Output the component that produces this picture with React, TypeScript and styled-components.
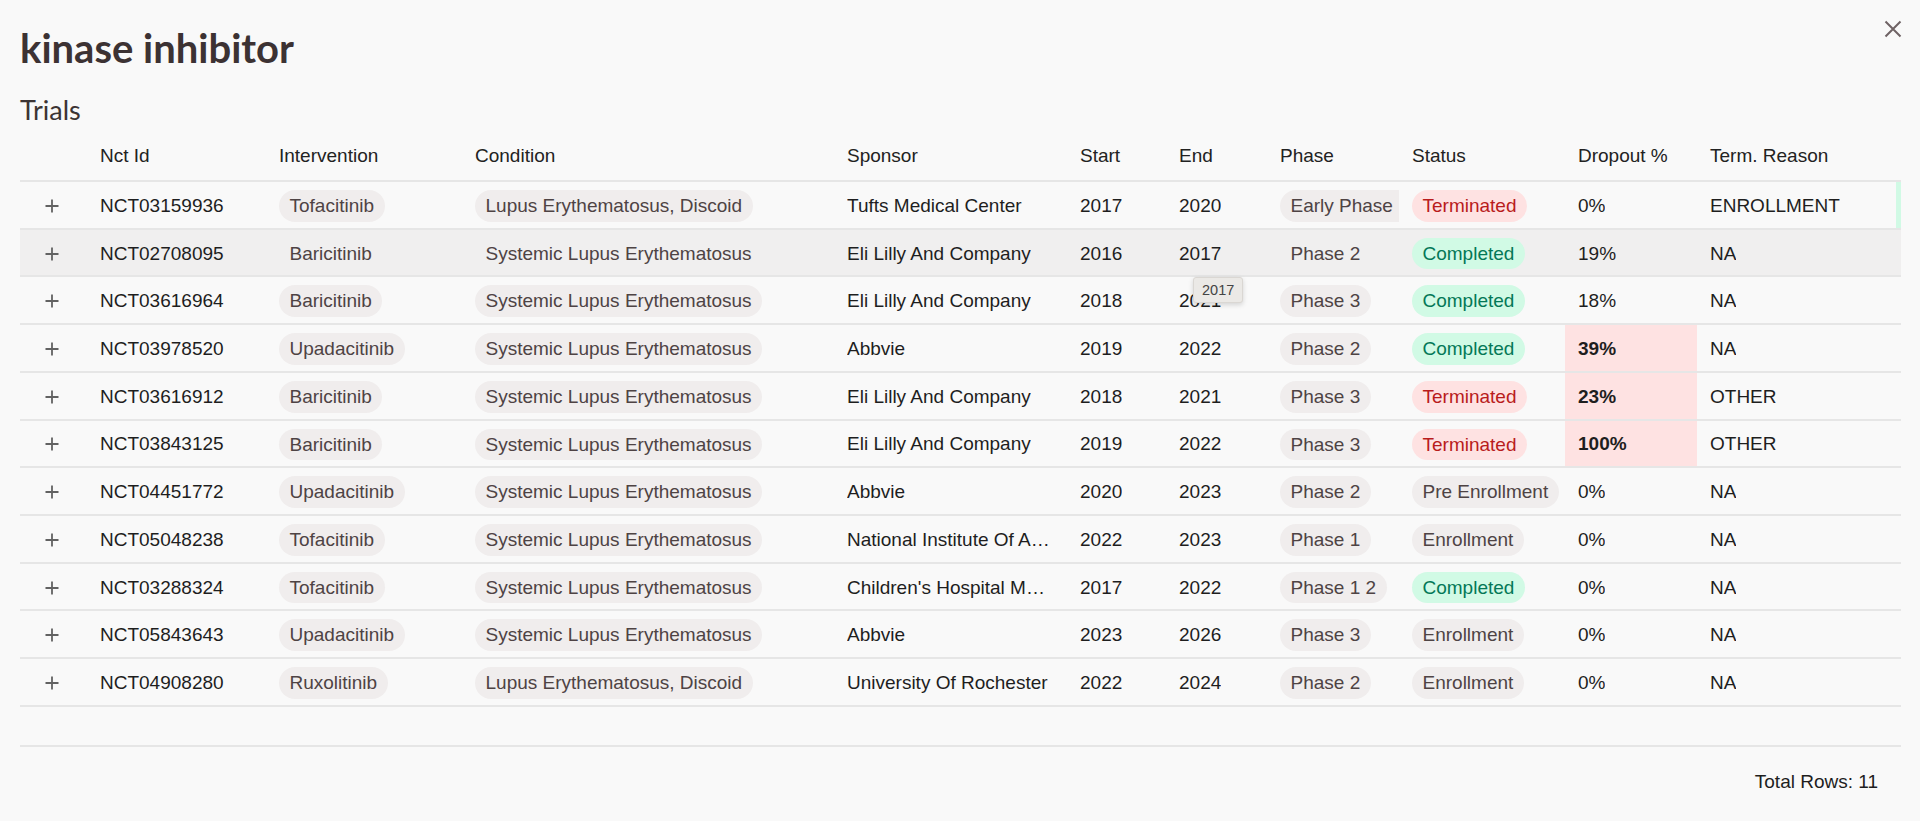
import React, { FC } from "react";
import styled, { createGlobalStyle } from "styled-components";

type Tone = "neutral" | "red" | "green";

interface ITrial {
  nctId: string;
  intervention: string;
  condition: string;
  sponsor: string;
  start: number;
  end: number;
  phase: string;
  status: string;
  dropout: number;
  reason: string;
}

const trials: ITrial[] = [
  { nctId: "NCT03159936", intervention: "Tofacitinib", condition: "Lupus Erythematosus, Discoid", sponsor: "Tufts Medical Center", start: 2017, end: 2020, phase: "Early Phase 1", status: "Terminated", dropout: 0, reason: "ENROLLMENT" },
  { nctId: "NCT02708095", intervention: "Baricitinib", condition: "Systemic Lupus Erythematosus", sponsor: "Eli Lilly And Company", start: 2016, end: 2017, phase: "Phase 2", status: "Completed", dropout: 19, reason: "NA" },
  { nctId: "NCT03616964", intervention: "Baricitinib", condition: "Systemic Lupus Erythematosus", sponsor: "Eli Lilly And Company", start: 2018, end: 2021, phase: "Phase 3", status: "Completed", dropout: 18, reason: "NA" },
  { nctId: "NCT03978520", intervention: "Upadacitinib", condition: "Systemic Lupus Erythematosus", sponsor: "Abbvie", start: 2019, end: 2022, phase: "Phase 2", status: "Completed", dropout: 39, reason: "NA" },
  { nctId: "NCT03616912", intervention: "Baricitinib", condition: "Systemic Lupus Erythematosus", sponsor: "Eli Lilly And Company", start: 2018, end: 2021, phase: "Phase 3", status: "Terminated", dropout: 23, reason: "OTHER" },
  { nctId: "NCT03843125", intervention: "Baricitinib", condition: "Systemic Lupus Erythematosus", sponsor: "Eli Lilly And Company", start: 2019, end: 2022, phase: "Phase 3", status: "Terminated", dropout: 100, reason: "OTHER" },
  { nctId: "NCT04451772", intervention: "Upadacitinib", condition: "Systemic Lupus Erythematosus", sponsor: "Abbvie", start: 2020, end: 2023, phase: "Phase 2", status: "Pre Enrollment", dropout: 0, reason: "NA" },
  { nctId: "NCT05048238", intervention: "Tofacitinib", condition: "Systemic Lupus Erythematosus", sponsor: "National Institute Of Allergy And Infectious Diseases (NIAID)", start: 2022, end: 2023, phase: "Phase 1", status: "Enrollment", dropout: 0, reason: "NA" },
  { nctId: "NCT03288324", intervention: "Tofacitinib", condition: "Systemic Lupus Erythematosus", sponsor: "Children's Hospital Medical Center, Cincinnati", start: 2017, end: 2022, phase: "Phase 1 2", status: "Completed", dropout: 0, reason: "NA" },
  { nctId: "NCT05843643", intervention: "Upadacitinib", condition: "Systemic Lupus Erythematosus", sponsor: "Abbvie", start: 2023, end: 2026, phase: "Phase 3", status: "Enrollment", dropout: 0, reason: "NA" },
  { nctId: "NCT04908280", intervention: "Ruxolitinib", condition: "Lupus Erythematosus, Discoid", sponsor: "University Of Rochester", start: 2022, end: 2024, phase: "Phase 2", status: "Enrollment", dropout: 0, reason: "NA" },
];

const headers = ["", "Nct Id", "Intervention", "Condition", "Sponsor", "Start", "End", "Phase", "Status", "Dropout %", "Term. Reason"];

const statusTone = (status: string): Tone => {
  if (status === "Terminated") return "red";
  if (status === "Completed") return "green";
  return "neutral";
};

const PlusIcon: FC = () => (
  <svg width="14" height="14" viewBox="0 0 14 14">
    <path d="M7 0.5v13M0.5 7h13" stroke="#626262" strokeWidth="1.8" />
  </svg>
);

const CloseIcon: FC = () => (
  <svg width="18" height="18" viewBox="0 0 18 18">
    <path d="M1.5 1.5l15 15M16.5 1.5l-15 15" stroke="#6f6365" strokeWidth="2" />
  </svg>
);

const App: FC = () => {
  return (
    <Page>
      <GlobalStyle />
      <TopBar>
        <Title>kinase inhibitor</Title>
        <CloseButton aria-label="close">
          <CloseIcon />
        </CloseButton>
      </TopBar>

      <SectionTitle>Trials</SectionTitle>

      <Table>
        <HeaderRow>
          {headers.map((h, i) => (
            <HeaderCell key={i}>{h}</HeaderCell>
          ))}
        </HeaderRow>

        {trials.map((t, i) => {
          const hovered = i === 1;
          const high = t.dropout > 20;
          return (
            <Row key={t.nctId} $hovered={hovered}>
              <ExpandCell>
                <PlusIcon />
              </ExpandCell>
              <Cell>
                <Text>{t.nctId}</Text>
              </Cell>
              <Cell>
                <Chip $tone="neutral" $flat={hovered}>{t.intervention}</Chip>
              </Cell>
              <Cell>
                <Chip $tone="neutral" $flat={hovered}>{t.condition}</Chip>
              </Cell>
              <Cell $padRight={15}>
                <Text>{t.sponsor}</Text>
              </Cell>
              <Cell>
                <Text>{t.start}</Text>
              </Cell>
              <Cell>
                <Text>{t.end}</Text>
              </Cell>
              <Cell $padRight={0}>
                <Chip $tone="neutral" $flat={hovered}>{t.phase}</Chip>
              </Cell>
              <Cell>
                <Chip $tone={statusTone(t.status)}>{t.status}</Chip>
              </Cell>
              <Cell $alert={high}>
                <Text>{t.dropout}%</Text>
              </Cell>
              <Cell $marked={i === 0}>
                <Text>{t.reason}</Text>
              </Cell>
              {hovered && <Tooltip>{t.end}</Tooltip>}
            </Row>
          );
        })}

        <Spacer />
      </Table>

      <Footer>Total Rows: {trials.length}</Footer>
    </Page>
  );
};

const GlobalStyle = createGlobalStyle`
  html, body {
    margin: 0;
    background: #f9f9f9;
  }
  body {
    font-family: "Liberation Sans", Arial, sans-serif;
    color: #1e1e1e;
  }
`;

const COLUMNS = "67px 179px 196px 372px 233px 99px 101px 132px 166px 132px 204px";

const Page = styled.div`
  min-height: 100vh;
  box-sizing: border-box;
  padding: 24px 19px 0 20px;
  background: #f9f9f9;
`;

const TopBar = styled.div`
  display: flex;
  justify-content: space-between;
  align-items: flex-start;
`;

const Title = styled.h1`
  margin: 0;
  font-family: Lato, "Noto Sans", sans-serif;
  font-size: 40px;
  line-height: 48px;
  font-weight: 700;
  color: #3c3233;
`;

const CloseButton = styled.button`
  margin: -4px -1px 0 0;
  padding: 0;
  border: 0;
  background: none;
  width: 18px;
  height: 18px;
  cursor: pointer;
  display: flex;
`;

const SectionTitle = styled.h2`
  margin: 22px 0 0;
  font-family: Lato, "Noto Sans", sans-serif;
  font-size: 27px;
  line-height: 32px;
  font-weight: 400;
  color: #3c3434;
`;

const Table = styled.div`
  margin-top: 8px;
  width: 1881px;
  font-size: 19px;
`;

const HeaderRow = styled.div`
  display: grid;
  grid-template-columns: ${COLUMNS};
  height: 48px;
  box-sizing: border-box;
  border-bottom: 2px solid #e6e6e6;
`;

const HeaderCell = styled.div`
  display: flex;
  align-items: center;
  padding: 0 13px 3px;
  white-space: nowrap;
  color: #222;
`;

const Row = styled.div<{ $hovered?: boolean }>`
  position: relative;
  display: grid;
  grid-template-columns: ${COLUMNS};
  height: 47.73px;
  box-sizing: border-box;
  padding-top: 2px;
  border-bottom: 2px solid #e6e6e6;
  background: ${({ $hovered }) => ($hovered ? "#f0efef" : "transparent")};
`;

const Cell = styled.div<{ $padRight?: number; $alert?: boolean; $marked?: boolean }>`
  display: flex;
  align-items: center;
  min-width: 0;
  overflow: hidden;
  margin-top: -2px;
  padding: 2px ${({ $padRight }) => ($padRight ?? 13)}px 0 13px;
  background: ${({ $alert }) => ($alert ? "#fee2e2" : "transparent")};
  font-weight: ${({ $alert }) => ($alert ? 700 : 400)};
  box-shadow: ${({ $marked }) => ($marked ? "inset -5px 0 0 #d1fae5" : "none")};
`;

const ExpandCell = styled.div`
  display: flex;
  align-items: center;
  padding-left: 25px;
`;

const Text = styled.span`
  min-width: 0;
  overflow: hidden;
  text-overflow: ellipsis;
  white-space: nowrap;
`;

const toneColors: Record<Tone, { bg: string; fg: string }> = {
  neutral: { bg: "#f0eded", fg: "#4e4344" },
  red: { bg: "#fee2e2", fg: "#b91c1c" },
  green: { bg: "#d1fae5", fg: "#047857" },
};

const Chip = styled.span<{ $tone: Tone; $flat?: boolean }>`
  flex-shrink: 0;
  display: inline-block;
  padding: 5px 10.5px;
  line-height: 21.7px;
  border-radius: 16px;
  white-space: nowrap;
  background: ${({ $tone, $flat }) => ($flat ? "transparent" : toneColors[$tone].bg)};
  color: ${({ $tone }) => toneColors[$tone].fg};
`;

const Tooltip = styled.div`
  position: absolute;
  left: 1173px;
  top: calc(100% + 2px);
  z-index: 10;
  padding: 4px 8px 3px;
  font-size: 14.5px;
  line-height: 17px;
  color: #444;
  background: #ebe9e6;
  border: 1px solid #dad7d3;
  border-radius: 3px;
  box-shadow: 0 2px 5px rgba(0, 0, 0, 0.15);
`;

const Spacer = styled.div`
  height: 40px;
  box-sizing: border-box;
  border-bottom: 2px solid #e6e6e6;
`;

const Footer = styled.div`
  width: 1881px;
  box-sizing: border-box;
  padding: 24px 23px 0 0;
  text-align: right;
  font-size: 19px;
  color: #1e1e1e;
`;

export default App;
